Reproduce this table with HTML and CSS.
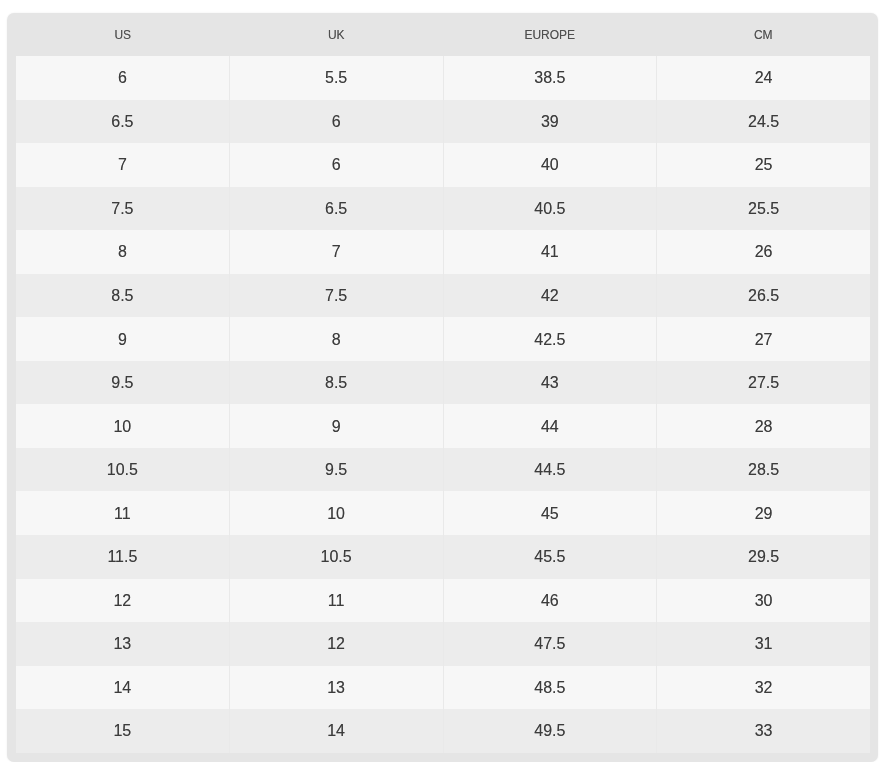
FILE: index.html
```html
<!DOCTYPE html>
<html>
<head>
<meta charset="utf-8">
<link rel="stylesheet" href="styles.css">
</head>
<body>
<div class="chart">
  <div class="head">
    <div>US</div><div>UK</div><div>EUROPE</div><div>CM</div>
  </div>
  <div class="rows">
    <div class="row"><div>6</div><div>5.5</div><div>38.5</div><div>24</div></div>
    <div class="row"><div>6.5</div><div>6</div><div>39</div><div>24.5</div></div>
    <div class="row"><div>7</div><div>6</div><div>40</div><div>25</div></div>
    <div class="row"><div>7.5</div><div>6.5</div><div>40.5</div><div>25.5</div></div>
    <div class="row"><div>8</div><div>7</div><div>41</div><div>26</div></div>
    <div class="row"><div>8.5</div><div>7.5</div><div>42</div><div>26.5</div></div>
    <div class="row"><div>9</div><div>8</div><div>42.5</div><div>27</div></div>
    <div class="row"><div>9.5</div><div>8.5</div><div>43</div><div>27.5</div></div>
    <div class="row"><div>10</div><div>9</div><div>44</div><div>28</div></div>
    <div class="row"><div>10.5</div><div>9.5</div><div>44.5</div><div>28.5</div></div>
    <div class="row"><div>11</div><div>10</div><div>45</div><div>29</div></div>
    <div class="row"><div>11.5</div><div>10.5</div><div>45.5</div><div>29.5</div></div>
    <div class="row"><div>12</div><div>11</div><div>46</div><div>30</div></div>
    <div class="row"><div>13</div><div>12</div><div>47.5</div><div>31</div></div>
    <div class="row"><div>14</div><div>13</div><div>48.5</div><div>32</div></div>
    <div class="row"><div>15</div><div>14</div><div>49.5</div><div>33</div></div>
  </div>
</div>
</body>
</html>
```
FILE: styles.css
```css
html, body {
  margin: 0;
  padding: 0;
  background: #ffffff;
}
body {
  padding: 13px 7px 0 7px;
  font-family: "Liberation Sans", Arial, sans-serif;
}
.chart {
  width: 871px;
  box-sizing: border-box;
  background: #e5e5e5;
  border-radius: 7px;
  padding: 0 8px 9px 9px;
  box-shadow: 0 0 2px rgba(0,0,0,0.08);
  filter: blur(0.5px);
}
.head {
  display: grid;
  grid-template-columns: repeat(4, 1fr);
  height: 43px;
  align-items: center;
  font-size: 12px;
  color: #4f4f4f;
  text-align: center;
  text-shadow: 0 0 0.5px rgba(0,0,0,0.35);
}
.rows {
  display: flex;
  flex-direction: column;
}
.row {
  display: grid;
  grid-template-columns: repeat(4, 1fr);
  column-gap: 1px;
  height: 43.55px;
  align-items: stretch;
  font-size: 16px;
  color: #3c3c3c;
  text-align: center;
  background: #e9e9e9;
  text-shadow: 0 0 0.5px rgba(0,0,0,0.4);
}
.row > div {
  display: flex;
  align-items: center;
  justify-content: center;
  padding-top: 1px;
  background: #f7f7f7;
}
.row:nth-child(even) > div {
  background: #ececec;
}
```
